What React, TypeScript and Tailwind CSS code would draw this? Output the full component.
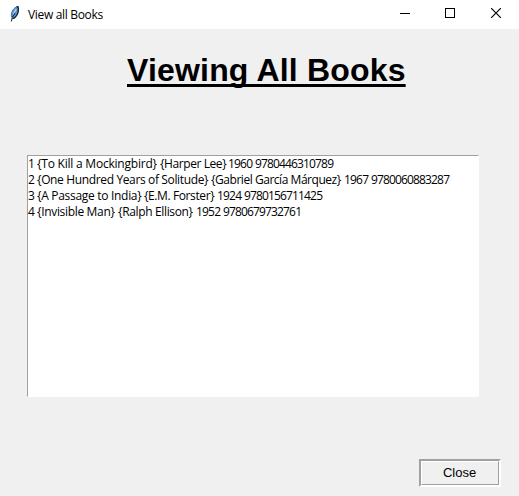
const books = [
  {
    id: '1', title: '{To Kill a Mockingbird}', author: '{Harper Lee}', year: '1960', isbn: '9780446310789',
    titleClass: 'w-[123px] tracking-[-0.22px]', authorClass: 'w-[68px] tracking-[-0.42px]',
  },
  {
    id: '2', title: '{One Hundred Years of Solitude}', author: '{Gabriel García Márquez}', year: '1967', isbn: '9780060883287',
    titleClass: 'w-[174px] tracking-[-0.36px]', authorClass: 'w-[133px] tracking-[-0.46px]',
  },
  {
    id: '3', title: '{A Passage to India}', author: '{E.M. Forster}', year: '1924', isbn: '9780156711425',
    titleClass: 'w-[107px] tracking-[-0.3px]', authorClass: 'w-[73px] tracking-[-0.4px]',
  },
  {
    id: '4', title: '{Invisible Man}', author: '{Ralph Ellison}', year: '1952', isbn: '9780679732761',
    titleClass: 'w-[81px] tracking-[-0.33px]', authorClass: 'w-[78px] tracking-[-0.35px]',
  },
];

function Feather() {
  return (
    <svg width="10" height="16" viewBox="0 0 10 16" fill="none">
      <path d="M1.500 11.500C.8 7.500 2.500 2 7.800.7c1 3.300.2 8-3.300 11.300z" fill="#5793d3" />
      <path d="M1.500 11C.9 7.500 2.500 2.500 6.500 1" stroke="#42688f" strokeWidth="1" />
      <path d="M6.500 1 8 .7c.8 3.300.2 8-3.500 11.300L2.500 12.500" stroke="#101820" strokeWidth="1.300" />
      <path d="M3.200 8.500 6.200 3" stroke="#a6d3ff" strokeWidth="1.400" />
      <path d="M1.300 15.500 2.300 11.500 5 7" stroke="#17202b" strokeWidth="1" />
    </svg>
  );
}

export default function App() {
  return (
    <div className="flex h-[496px] w-[519px] flex-col bg-[#f0f0f0] font-['Open_Sans','Noto_Sans',sans-serif] text-xs text-black">
      <header className="flex h-[29px] shrink-0 items-center bg-white pl-[10px]">
        <div className="mt-[-2px]"><Feather /></div>
        <span className="ml-2 flex-1 tracking-[-0.33px]">View all Books</span>
        <div className="mb-[3px] mr-[18px] flex items-center">
          <svg className="mr-[35px]" width="10" height="10" viewBox="0 0 10 10" shapeRendering="crispEdges"><path d="M0 5h10v1H0z" /></svg>
          <svg className="mr-9" width="10" height="10" viewBox="0 0 10 10" fill="none" stroke="#000" shapeRendering="crispEdges"><path d="M.5.5h9v9h-9z" /></svg>
          <svg width="10" height="10" viewBox="0 0 10 10" fill="none" stroke="#000" strokeWidth="1.150"><path d="m0 0 10 10M10 0 0 10" /></svg>
        </div>
      </header>
      <main className="flex flex-1 flex-col">
        <h1 className="ml-[127px] mt-[23px] h-[37px] self-start whitespace-nowrap font-['Liberation_Sans',sans-serif] text-[32px] font-bold leading-[37px] tracking-[0.18px] underline decoration-[3px] underline-offset-[3px] [text-decoration-skip-ink:none]">
          Viewing All Books
        </h1>
        <ul className="ml-[27px] mt-[66px] h-[242px] w-[452px] border border-b-white border-l-[#a0a0a0] border-r-white border-t-[#a0a0a0] bg-white">
          {books.map((book) => (
            <li key={book.id} className="flex h-4 whitespace-nowrap leading-4">
              <span className="w-[9px]">{book.id}</span>
              <span className={book.titleClass}>{book.title}</span>
              <span className={book.authorClass}>{book.author}</span>
              <span className="w-[27px] tracking-[-0.8px]">{book.year}</span>
              <span className="tracking-[-0.85px]">{book.isbn}</span>
            </li>
          ))}
        </ul>
        <button className="ml-[419px] mt-[62px] flex h-7 w-[82px] border-2 border-b-white border-l-[#a0a0a0] border-r-white border-t-[#a0a0a0] font-['Liberation_Sans',sans-serif] text-[13px]">
          <span className="flex h-full w-full items-center justify-center border border-b-[#a0a0a0] border-l-white border-r-[#a0a0a0] border-t-white pr-px">
            Close
          </span>
        </button>
      </main>
    </div>
  );
}
